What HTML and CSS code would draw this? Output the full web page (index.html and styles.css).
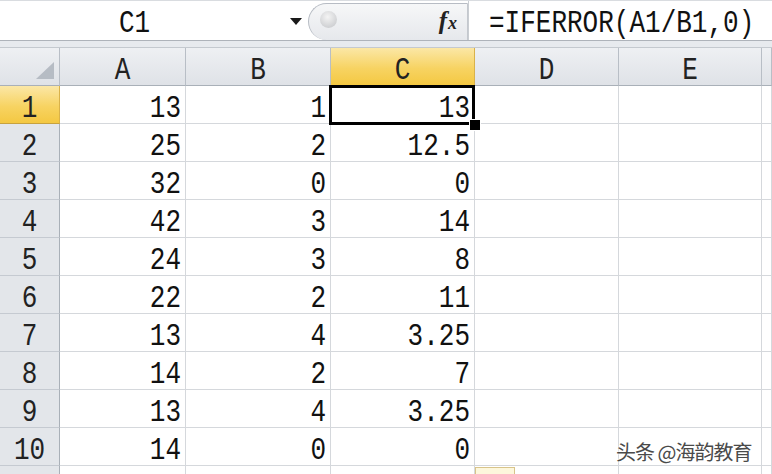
FILE: index.html
```html
<!DOCTYPE html>
<html>
<head>
<meta charset="utf-8">
<link rel="stylesheet" href="styles.css">
</head>
<body>
<div class="app">
  <div class="fbar">
    <div class="namebox">
      <span class="name t">C1</span>
      <svg class="dd" width="12" height="7" viewBox="0 0 12 7"><path d="M0 0H12L6 7Z" fill="#1a1a1a"/></svg>
    </div>
    <div class="fxzone">
      <span class="cancel"></span>
      <span class="fx"><span class="f">f</span><span class="x">x</span></span>
    </div>
    <div class="formula"><span class="t">=IFERROR(A1/B1,0)</span></div>
  </div>
  <div class="gap"></div>
  <div class="sheet">
    <div class="hdr corner"><span class="tri"></span></div>
    <div class="hdr col"><span class="t">A</span></div>
    <div class="hdr col"><span class="t">B</span></div>
    <div class="hdr col sel"><span class="t">C</span></div>
    <div class="hdr col"><span class="t">D</span></div>
    <div class="hdr col"><span class="t">E</span></div>
    <div class="hdr col"></div>

    <div class="hdr row sel"><span class="t">1</span></div><div class="cell"><span class="t">13</span></div><div class="cell"><span class="t">1</span></div><div class="cell active"><span class="t">13</span><span class="handle"></span></div><div class="cell"></div><div class="cell"></div><div class="cell"></div>
    <div class="hdr row"><span class="t">2</span></div><div class="cell"><span class="t">25</span></div><div class="cell"><span class="t">2</span></div><div class="cell"><span class="t">12.5</span></div><div class="cell"></div><div class="cell"></div><div class="cell"></div>
    <div class="hdr row"><span class="t">3</span></div><div class="cell"><span class="t">32</span></div><div class="cell"><span class="t">0</span></div><div class="cell"><span class="t">0</span></div><div class="cell"></div><div class="cell"></div><div class="cell"></div>
    <div class="hdr row"><span class="t">4</span></div><div class="cell"><span class="t">42</span></div><div class="cell"><span class="t">3</span></div><div class="cell"><span class="t">14</span></div><div class="cell"></div><div class="cell"></div><div class="cell"></div>
    <div class="hdr row"><span class="t">5</span></div><div class="cell"><span class="t">24</span></div><div class="cell"><span class="t">3</span></div><div class="cell"><span class="t">8</span></div><div class="cell"></div><div class="cell"></div><div class="cell"></div>
    <div class="hdr row"><span class="t">6</span></div><div class="cell"><span class="t">22</span></div><div class="cell"><span class="t">2</span></div><div class="cell"><span class="t">11</span></div><div class="cell"></div><div class="cell"></div><div class="cell"></div>
    <div class="hdr row"><span class="t">7</span></div><div class="cell"><span class="t">13</span></div><div class="cell"><span class="t">4</span></div><div class="cell"><span class="t">3.25</span></div><div class="cell"></div><div class="cell"></div><div class="cell"></div>
    <div class="hdr row"><span class="t">8</span></div><div class="cell"><span class="t">14</span></div><div class="cell"><span class="t">2</span></div><div class="cell"><span class="t">7</span></div><div class="cell"></div><div class="cell"></div><div class="cell"></div>
    <div class="hdr row"><span class="t">9</span></div><div class="cell"><span class="t">13</span></div><div class="cell"><span class="t">4</span></div><div class="cell"><span class="t">3.25</span></div><div class="cell"></div><div class="cell"></div><div class="cell"></div>
    <div class="hdr row"><span class="t">10</span></div><div class="cell"><span class="t">14</span></div><div class="cell"><span class="t">0</span></div><div class="cell"><span class="t">0</span></div><div class="cell"></div><div class="cell"></div><div class="cell"></div>
    <div class="hdr row"></div><div class="cell"></div><div class="cell"></div><div class="cell"><span class="opts"></span></div><div class="cell"></div><div class="cell"></div><div class="cell"></div>
  </div>
  <div class="watermark">头条 @海韵教育</div>
</div>
</body>
</html>
```
FILE: styles.css
```css
html, body {
  margin: 0;
  padding: 0;
  background: #ffffff;
}
.app {
  position: relative;
  width: 772px;
  height: 474px;
  overflow: hidden;
  font-family: "Liberation Mono", "DejaVu Sans Mono", monospace;
  color: #111;
}
.t {
  display: inline-block;
  transform: scaleY(1.18);
}
.fbar {
  display: flex;
  height: 41px;
  box-sizing: border-box;
  border-top: 1px solid #d9dce0;
  border-bottom: 1px solid #aeb3ba;
  background: #ffffff;
}
.namebox {
  width: 308px;
  display: flex;
  align-items: center;
  position: relative;
  box-sizing: border-box;
  padding-top: 6px;
}
.name {
  font-size: 26px;
  margin-left: 119px;
}
.dd {
  margin-left: auto;
  margin-right: 6px;
  margin-top: -4px;
}
.fxzone {
  width: 160px;
  margin-top: 2px;
  box-sizing: border-box;
  border: 1px solid #b7bcc4;
  border-right: 1px solid #c4c8ce;
  border-bottom: none;
  border-radius: 20px 0 0 20px;
  background: linear-gradient(#f6f7f8, #e6e8ec);
  display: flex;
  align-items: center;
  padding-left: 11px;
  padding-right: 10px;
}
.cancel {
  width: 17px;
  height: 17px;
  border-radius: 50%;
  background: radial-gradient(circle at 45% 35%, #f4f4f4 0%, #d8d9db 55%, #c2c4c7 100%);
  margin-top: -6px;
}
.fx {
  margin-left: auto;
  font-family: "Liberation Serif", "DejaVu Serif", serif;
  font-style: italic;
  font-weight: bold;
  color: #222;
  display: flex;
  align-items: flex-end;
  margin-top: -2px;
}
.fx .f {
  font-size: 25px;
}
.fx .x {
  font-size: 18px;
  margin-left: 1px;
  margin-bottom: 1px;
}
.formula {
  flex: 1;
  font-size: 26px;
  padding-left: 20px;
  display: flex;
  align-items: center;
  padding-top: 6px;
  border-left: 1px solid #c9cdd2;
}
.gap {
  height: 6px;
  background: #e7eaee;
  border-bottom: 1px solid #c4c9cf;
}
.sheet {
  display: grid;
  grid-template-columns: 60px 126px 145px 144px 144px 143px 1fr;
  grid-auto-rows: 38px;
}
.hdr {
  box-sizing: border-box;
  background: linear-gradient(#eef0f3, #dfe2e7);
  border-right: 1px solid #b8bec6;
  border-bottom: 1px solid #a9b0b8;
  display: flex;
  align-items: center;
  justify-content: center;
  font-size: 26px;
  color: #222;
  padding-top: 8px;
}
.hdr.row {
  background: #e3e6ea;
  border-bottom: 1px solid #c5cad1;
  border-right: 1px solid #a9b0b8;
}
.hdr.sel {
  background: linear-gradient(#fbe7a6, #f7d362 55%, #f4c842);
  border-right-color: #d9b24a;
  border-bottom-color: #c7a23f;
}
.corner {
  position: relative;
}
.tri {
  position: absolute;
  right: 5px;
  bottom: 6px;
  width: 0;
  height: 0;
  border-left: 18px solid transparent;
  border-bottom: 17px solid #b6bcc4;
}
.cell {
  box-sizing: border-box;
  border-right: 1px solid #d5d8dc;
  border-bottom: 1px solid #d5d8dc;
  display: flex;
  align-items: center;
  justify-content: flex-end;
  padding-right: 4px;
  padding-top: 9px;
  font-size: 26px;
  color: #111;
  position: relative;
}
.cell.active {
  z-index: 2;
}
.cell.active::before {
  content: "";
  position: absolute;
  left: -2px;
  top: -1px;
  right: -1px;
  bottom: -2px;
  border: 3px solid #000;
}
.handle {
  position: absolute;
  right: -7px;
  bottom: -8px;
  width: 10px;
  height: 10px;
  background: #000;
  border: 1px solid #fff;
}
.opts {
  position: absolute;
  left: 144px;
  top: 1px;
  width: 40px;
  height: 14px;
  box-sizing: border-box;
  border: 1px solid #d8c48a;
  background: #fdf7dc;
}
.watermark {
  position: absolute;
  left: 616px;
  top: 437px;
  font-family: "Noto Sans CJK SC", sans-serif;
  font-size: 20px;
  color: #4a4a4a;
  letter-spacing: -1px;
  text-shadow: 0 0 2px #fff, 0 0 2px #fff, 0 0 2px #fff;
}
```
